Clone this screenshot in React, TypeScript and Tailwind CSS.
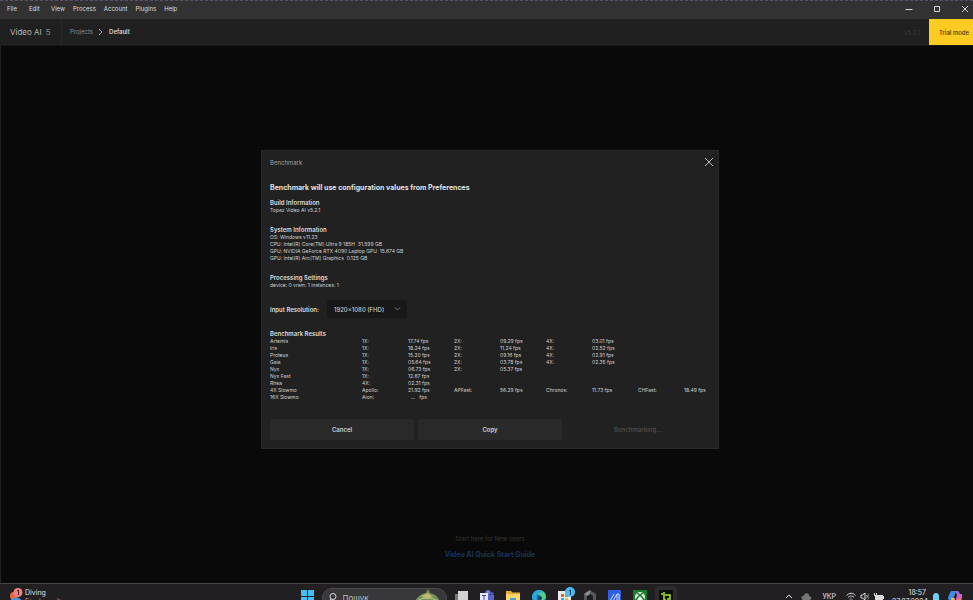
import type { ReactNode } from 'react';

const menu = ['File', 'Edit', 'View', 'Process', 'Account', 'Plugins', 'Help'];

const results = [
  ['Artemis', '1X:', '17.74 fps', '2X:', '09.29 fps', '4X:', '03.01 fps', '', ''],
  ['Iris', '1X:', '18.24 fps', '2X:', '11.24 fps', '4X:', '02.52 fps', '', ''],
  ['Proteus', '1X:', '15.20 fps', '2X:', '09.16 fps', '4X:', '02.91 fps', '', ''],
  ['Gaia', '1X:', '05.64 fps', '2X:', '03.78 fps', '4X:', '02.35 fps', '', ''],
  ['Nyx', '1X:', '06.73 fps', '2X:', '05.37 fps', '', '', '', ''],
  ['Nyx Fast', '1X:', '12.67 fps', '', '', '', '', '', ''],
  ['Rhea', '4X:', '02.31 fps', '', '', '', '', '', ''],
  ['4X Slowmo', 'Apollo:', '21.92 fps', 'APFast:', '56.29 fps', 'Chronos:', '11.73 fps', 'CHFast:', '18.49 fps'],
  ['16X Slowmo', 'Aion:', '  ...   fps', '', '', '', '', '', '']
];

function TitleBar() {
  return (
    <header className="flex h-[19px] shrink-0 items-center justify-between border-t border-dashed border-[#59506a] bg-[#323232] pb-[2px]">
      <nav className="flex gap-2 pl-[7px] text-[6px] leading-[8px] text-[#dcdcdc]">
        {menu.map((item) => (
          <button key={item} className="min-w-[14px] text-left">
            {item}
          </button>
        ))}
      </nav>
      <div className="flex items-center gap-5 pr-1">
        <button aria-label="Minimize">
          <svg width="8" height="8" viewBox="0 0 8 8" stroke="#d6d6d6">
            <path d="M0.5 4.5h7" />
          </svg>
        </button>
        <button aria-label="Maximize">
          <svg width="8" height="8" viewBox="0 0 8 8" fill="none" stroke="#d6d6d6">
            <path d="M1.5 1.5h5v5h-5z" />
          </svg>
        </button>
        <button aria-label="Close">
          <svg width="8" height="8" viewBox="0 0 8 8" stroke="#d6d6d6">
            <path d="M1 1l6 6M7 1L1 7" />
          </svg>
        </button>
      </div>
    </header>
  );
}

function ProjectBar() {
  return (
    <div className="flex h-[27px] shrink-0 items-stretch border-b border-[#181818] bg-[#202020] text-[6px]">
      <div className="flex w-[62px] items-center gap-1 border-r border-[#292929] pl-[10px] text-[8px] text-[#b9b9b9]">
        <span>Video AI</span>
        <span className="text-[#888888]">5</span>
      </div>
      <div className="flex items-center gap-[5px] pl-2">
        <a href="#projects" className="leading-[8px] text-[#8c8c8c]">Projects</a>
        <svg width="6" height="8" viewBox="0 0 6 8" fill="none" stroke="#a0a0a0">
          <path d="M1 1l3 3-3 3" />
        </svg>
        <span className="leading-[8px] font-medium text-[#e2e2e2]">Default</span>
      </div>
      <span className="ml-auto self-center pr-[9px] text-[#3c3c3c]">v5.2.1</span>
      <button className="w-11 bg-[#fecb22] pl-[6px] font-medium whitespace-nowrap text-[#413714]">Trial mode</button>
    </div>
  );
}

function Section({ title, children }: { title: string; children: ReactNode }) {
  return (
    <section className="text-[5px] leading-[7px] text-[#d2d2d2]">
      <h3 className="text-[6px] leading-[9px] font-semibold text-[#dcdcdc]">{title}</h3>
      {children}
    </section>
  );
}

function BenchmarkDialog() {
  return (
    <div role="dialog" aria-label="Benchmark" className="w-[458px] border border-[#292929] bg-[#212121] px-2 pb-2">
      <div className="-mr-1 flex h-[22px] items-center justify-between">
        <h1 className="text-[6px] text-[#a0a0a0]">Benchmark</h1>
        <button aria-label="Close dialog">
          <svg width="10" height="10" viewBox="0 0 10 10" stroke="#bdbdbd">
            <path d="M1 1l8 8M9 1L1 9" />
          </svg>
        </button>
      </div>
      <h2 className="mt-[9px] text-[7px] leading-[12px] font-bold text-[#e2e2e2]">
        Benchmark will use configuration values from Preferences
      </h2>
      <div className="mt-1 flex flex-col gap-[11px]">
        <Section title="Build Information">
          <p>Topaz Video AI v5.2.1</p>
        </Section>
        <Section title="System Information">
          <p>OS: Windows v11.23</p>
          <p className="whitespace-pre">CPU: Intel(R) Core(TM) Ultra 9 185H  31.599 GB</p>
          <p className="whitespace-pre">GPU: NVIDIA GeForce RTX 4090 Laptop GPU  15.674 GB</p>
          <p className="whitespace-pre">GPU: Intel(R) Arc(TM) Graphics  0.125 GB</p>
        </Section>
        <Section title="Processing Settings">
          <p>device: 0 vram: 1 instances: 1</p>
        </Section>
      </div>
      <div className="mt-[11px] flex items-center gap-2 text-[6px]">
        <label htmlFor="resolution" className="font-semibold text-[#dcdcdc]">Input Resolution:</label>
        <div className="relative">
          <select id="resolution" className="h-[18px] w-20 appearance-none rounded-xs bg-[#181818] pl-[7px] font-medium text-[#cccccc]">
            <option>1920×1080 (FHD)</option>
          </select>
          <svg className="pointer-events-none absolute top-[6px] right-[6px]" width="7" height="6" viewBox="0 0 7 6" fill="none" stroke="#777777">
            <path d="M1 1.5l2.500 2.500L6 1.500" />
          </svg>
        </div>
      </div>
      <div className="mt-[11px]">
        <Section title="Benchmark Results">
          <table className="w-full table-fixed text-left whitespace-pre">
            <colgroup>
              <col className="w-[92px]" />
              <col span={7} className="w-[46px]" />
              <col />
            </colgroup>
            <tbody>
              {results.map((row) => (
                <tr key={row[0]}>
                  {row.map((cell, i) => (
                    <td key={i} className="p-0">{cell}</td>
                  ))}
                </tr>
              ))}
            </tbody>
          </table>
        </Section>
      </div>
      <div className="mt-[18px] grid grid-cols-3 gap-1 text-[6px] font-semibold">
        <button className="h-[21px] rounded-xs bg-[#2a2a2a] text-[#d0d0d0]">Cancel</button>
        <button className="h-[21px] rounded-xs bg-[#2a2a2a] text-[#d0d0d0]">Copy</button>
        <button className="h-[21px] text-[#4a4a4a]" disabled>Benchmarking...</button>
      </div>
    </div>
  );
}

function Taskbar() {
  return (
    <footer className="grid h-[17px] shrink-0 grid-cols-[1fr_auto_1fr] items-start overflow-hidden border-t border-[#454345] bg-[#211f22] text-[#e2e2e2]">
      <button className="flex items-start gap-[2px] pt-1 pl-[9px] text-left text-[7px] leading-[9px]">
        <svg width="14" height="14" viewBox="0 0 14 14">
          <circle cx="5" cy="8" r="4" fill="#e36b43" />
          <path d="M1 14c0-5 10-6 12-1v1z" fill="#4c93df" />
          <circle cx="9" cy="4.500" r="4.500" fill="#f08282" />
          <path d="M8 3l1.500-1v5" fill="none" stroke="#4b1719" />
        </svg>
        <span>
          Diving
          <br />
          <span className="text-[#a0a0a0]">Final results</span>
        </span>
      </button>

      <div className="flex items-start pl-1">
        <button aria-label="Start" className="pt-[6px]">
          <svg width="13" height="13" viewBox="0 0 13 13" fill="#45bff2">
            <path d="M0 0h6v6H0zM7 0h6v6H7zM0 7h6v6H0zM7 7h6v6H7z" />
          </svg>
        </button>
        <label className="mt-1 ml-2 flex h-5 w-[125px] items-start rounded-full border border-[#4a494c] bg-[#38373a] pl-[5px]">
          <svg className="mt-1" width="9" height="9" viewBox="0 0 9 9" fill="none" stroke="#dddddd">
            <circle cx="5" cy="3.500" r="3" />
            <path d="M3 6L0.500 8.500" />
          </svg>
          <input aria-label="Пошук" placeholder="Пошук" className="mt-1 ml-[6px] h-[10px] w-[72px] text-[8px] outline-none placeholder:text-[#bdbdbd]" />
          <svg width="26" height="16" viewBox="0 0 26 16">
            <path d="M0 12C4 6 7 5 11 4l2-4 2 4c5 1 8 4 10 8v4H0z" fill="#74905c" />
            <path d="M6 7l7-3 5 4-6 2z" fill="#c3b867" />
            <path d="M2 12c5-4 14-4 21 0" fill="none" stroke="#b3c785" />
          </svg>
        </label>
        <div className="flex items-start gap-3 pt-[6px] pl-2">
          <button aria-label="Task view">
            <svg width="13" height="13" viewBox="0 0 13 13">
              <path d="M0 4h9v8H0z" fill="#777777" />
              <path d="M3 1h10v9H3z" fill="#d2d2d2" />
            </svg>
          </button>
          <button aria-label="Teams">
            <svg width="14" height="13" viewBox="0 0 14 13">
              <circle cx="8" cy="2.500" r="2.500" fill="#7279e0" />
              <circle cx="12" cy="3.500" r="1.500" fill="#5962c6" />
              <path d="M5 5h9v8H5z" fill="#5b62c8" />
              <path d="M0 3h8v9H0z" fill="#e4e6fb" />
              <path d="M2 5.500h4M4 5.500V10" stroke="#4148a5" />
            </svg>
          </button>
          <button aria-label="Explorer">
            <svg width="14" height="13" viewBox="0 0 14 13">
              <path d="M0 1h5l1.500 1.500H14V13H0z" fill="#e9ab32" />
              <path d="M0 4h14v9H0z" fill="#ffd669" />
              <path d="M4 8h6v5H4z" fill="#4a9ddb" />
            </svg>
          </button>
          <button aria-label="Edge">
            <svg width="14" height="14" viewBox="0 0 14 14">
              <circle cx="7" cy="7" r="7" fill="#1679bd" />
              <path d="M1 5C3-2 14-1 14 7c0 4-6 4-6 1 2-3-4-6-7-3z" fill="#52cf8c" />
              <path d="M0 7c1-8 9-8 11-4-4-2-8 2-6 8C1 11 0 9 0 7z" fill="#28a8de" />
              <circle cx="8" cy="8" r="2" fill="#173b52" />
            </svg>
          </button>
          <button aria-label="Store" className="-mt-[3px] -mr-[3px]">
            <svg width="17" height="16" viewBox="0 0 17 16">
              <path d="M0 4h13v12H0z" fill="#ececec" />
              <path d="M3 7h3v3H3z" fill="#e85b3e" />
              <path d="M7 7h3v3H7z" fill="#6fb744" />
              <path d="M3 11h3v3H3z" fill="#36a5dd" />
              <path d="M7 11h3v3H7z" fill="#edbb36" />
              <circle cx="12" cy="5" r="5" fill="#4bb9f2" />
              <path d="M11 4l1.500-1v5" fill="none" stroke="#12435c" />
            </svg>
          </button>
          <button aria-label="Armoury">
            <svg width="12" height="14" viewBox="0 0 12 14">
              <path d="M6 0l6 4v6l-6 4-6-4V4z" fill="#55575b" />
              <path d="M6 4l3 2v4H3V6z" fill="#1c1e20" />
              <path d="M6 0v4L3 6 0 4z" fill="#8a8c90" />
            </svg>
          </button>
          <button aria-label="MyASUS">
            <svg width="13" height="13" viewBox="0 0 13 13">
              <path d="M0 0h13v13H0z" fill="#315fe3" />
              <path d="M2 11l4-7M5 11l4-7v7M9 4h2v7" fill="none" stroke="#c9d6ff" />
            </svg>
          </button>
          <button aria-label="Xbox">
            <svg width="14" height="13" viewBox="0 0 14 13">
              <path d="M0 0h14v13H0z" fill="#187b2b" />
              <circle cx="7" cy="7" r="5" fill="#e4efe5" />
              <path d="M3 12c0-4 2-5 4-7 2 2 4 3 4 7M4 3l3 2 3-2" fill="none" stroke="#187b2b" strokeWidth="1.500" />
            </svg>
          </button>
        </div>
        <button aria-label="Topaz Video AI" className="mt-[2px] ml-2 rounded-t bg-[#2d2b2e] px-1 pt-1">
          <svg width="14" height="14" viewBox="0 0 14 14">
            <path d="M0 0h14v14H0z" fill="#0c100c" />
            <path d="M2 4h2M5 2v8h2M6 5h5v4H8" fill="none" stroke="#a9e62d" strokeWidth="1.500" />
          </svg>
        </button>
      </div>

      <div className="flex items-start justify-end gap-2 pt-1 pr-[11px] text-[7px] leading-[9px]">
        <svg className="mt-[6px]" width="8" height="6" viewBox="0 0 8 6" fill="none" stroke="#dddddd">
          <path d="M1 4l3-3 3 3" />
        </svg>
        <svg className="mt-[5px]" width="11" height="8" viewBox="0 0 11 8" fill="#777777">
          <path d="M2 7C-1 5 1 2 3 3c0-4 6-3 5 0 3 0 3 4 0 4z" />
        </svg>
        <span className="pt-1 pl-[2px]">УКР</span>
        <div className="flex gap-1 pt-1 pl-[2px]">
          <svg width="10" height="9" viewBox="0 0 10 9" fill="none" stroke="#dddddd">
            <path d="M0.500 3.500c3-3 6-3 9 0M2 5.500c2-2 4-2 6 0M4 7.500l1-1 1 1" />
          </svg>
          <svg width="9" height="9" viewBox="0 0 9 9" fill="none" stroke="#dddddd">
            <path d="M1 3h1.500L5 1v7L2.500 6H1z" />
            <path d="M6.500 3c1 1 1 2 0 3" />
            <path d="M8 1.500c1 2 1 4 0 6" stroke="#777777" />
          </svg>
          <svg width="11" height="9" viewBox="0 0 11 9" fill="#dddddd">
            <path d="M2 3h8v5H2zM10 4h1v3h-1zM1 1h1v2h1V1h1v3H3v3H2V4H1z" />
          </svg>
        </div>
        <div className="w-[34px] text-right whitespace-nowrap">
          18:57
          <br />
          27.07.2024
        </div>
        <svg className="mt-[5px] -ml-[2px]" width="8" height="10" viewBox="0 0 8 10" fill="#72d0f3">
          <path d="M1 7V3c0-4 6-4 6 0v4l1 2H0z" />
        </svg>
        <svg className="mt-[2px]" width="14" height="14" viewBox="0 0 14 14">
          <path d="M3 1h5L5 10H2C-1 10 0 7 1 5z" fill="#3e8be8" />
          <path d="M7 1h3l2 3h2c1 4-1 9-4 9H7l2-8z" fill="#d260bd" />
          <path d="M3 8h4l-1 5H4z" fill="#efbd42" />
          <path d="M8 1h2l2 3H9z" fill="#8d6cec" />
          <path d="M9 9h4l-2 4H7z" fill="#f28260" />
        </svg>
      </div>
    </footer>
  );
}

export default function App() {
  return (
    <div className="flex h-screen flex-col overflow-hidden bg-[#090909] font-['Inter',sans-serif]">
      <TitleBar />
      <ProjectBar />
      <main className="relative flex flex-1 items-center justify-center border-l border-[#222222] pb-[30px] pl-[6px]">
        <BenchmarkDialog />
        <div className="absolute inset-x-0 bottom-6 flex flex-col items-center gap-2 pl-[6px] text-[7px] leading-[8px]">
          <p className="text-[6px] text-[#363636]">Start here for New users</p>
          <a href="#guide" className="font-bold text-[#17365a]">Video AI Quick Start Guide</a>
        </div>
      </main>
      <Taskbar />
    </div>
  );
}
